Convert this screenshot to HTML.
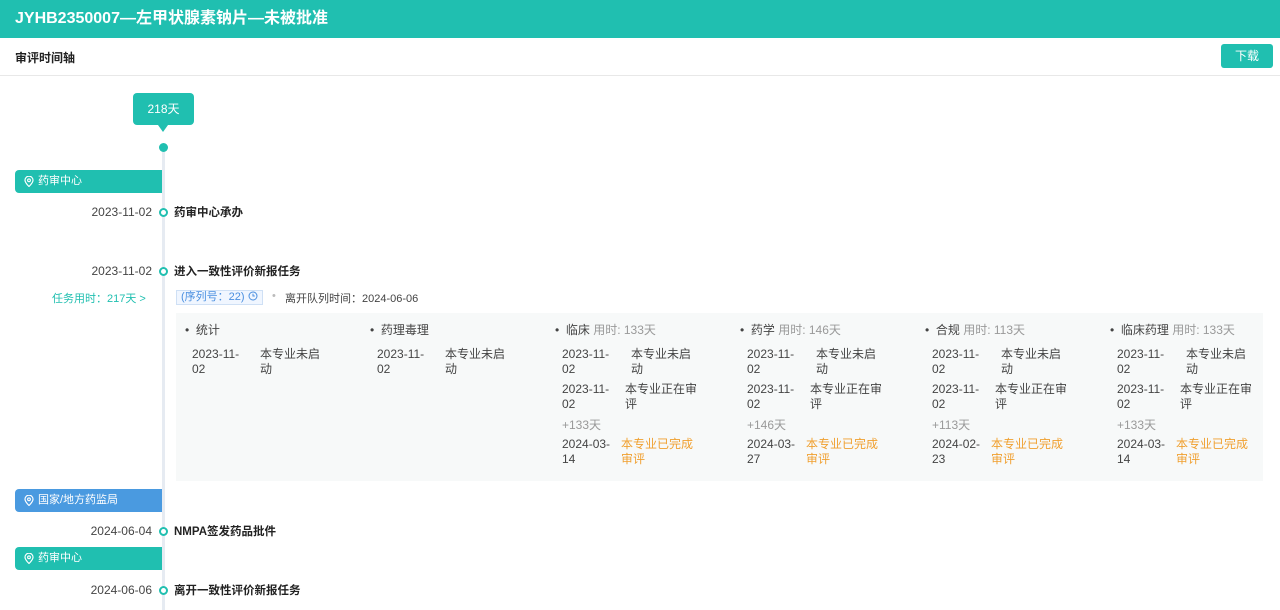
<!DOCTYPE html>
<html><head><meta charset="utf-8"><style>
*{margin:0;padding:0;box-sizing:border-box}
body{width:1280px;height:605px;overflow:hidden;background:#fff;font-family:"Liberation Sans","Noto Sans CJK SC",sans-serif;font-size:12px;color:#333;position:relative}
.a{position:absolute;white-space:nowrap}
.hdr{left:0;top:0;width:1280px;height:38px;background:#20bfb0;color:#fff;font-weight:bold;font-size:16px;line-height:38px;padding-left:15px}
.sub{left:0;top:38px;width:1280px;height:38px;border-bottom:1px solid #e8e8e8}
.btn{left:1221px;top:44px;width:52px;height:24px;background:#20bfb0;color:#fff;border-radius:3px;text-align:center;line-height:24px;font-size:12px}
.line{left:162px;top:150px;width:3px;height:460px;background:#e6ebf2}
.tag{left:15px;width:147px;height:23px;color:#fff;line-height:23px;padding-left:23px;border-radius:4px 0 0 4px;font-size:11px}
.tag svg{position:absolute;left:9px;top:6px}
.dt{width:80px;left:72px;text-align:right;color:#444}
.ring{left:159px;width:9px;height:9px;border:2px solid #20bfb0;border-radius:50%;background:#fff}
.tt{left:174px;font-weight:bold;color:#222;font-size:11.5px}
.panel{left:176px;top:313px;width:1087px;height:168px;background:#f7f9f9}
.c{line-height:15px;color:#444}
.g{color:#999}
.o{color:#f0a030}
</style></head><body>
<div class="a hdr">JYHB2350007—左甲状腺素钠片—未被批准</div>
<div class="a sub"></div>
<div class="a" style="left:15px;top:49px;font-weight:bold;font-size:12px;color:#222">审评时间轴</div>
<div class="a btn">下载</div>
<div class="a line"></div>
<div class="a" style="left:133px;top:93px;width:61px;height:32px;background:#20bfb0;border-radius:4px;color:#fff;text-align:center;line-height:32px">218天</div>
<div class="a" style="left:158px;top:125px;width:0;height:0;border-left:5px solid transparent;border-right:5px solid transparent;border-top:7px solid #20bfb0"></div>
<div class="a" style="left:159px;top:143px;width:9px;height:9px;border-radius:50%;background:#20bfb0"></div>

<div class="a tag" style="top:170px;background:#20bfb0"><svg width="10" height="11" viewBox="0 0 10 11"><path d="M5 10.5C2 7.5 1 6 1 4.2A4 4 0 0 1 9 4.2C9 6 8 7.5 5 10.5Z" fill="none" stroke="#fff" stroke-width="1.2"/><circle cx="5" cy="4.3" r="1.4" fill="none" stroke="#fff" stroke-width="1.1"/></svg>药审中心</div>
<div class="a dt" style="top:205px">2023-11-02</div><div class="a ring" style="top:208px"></div><div class="a tt" style="top:204px">药审中心承办</div>
<div class="a dt" style="top:264px">2023-11-02</div><div class="a ring" style="top:267px"></div><div class="a tt" style="top:263px">进入一致性评价新报任务</div>
<div class="a" style="left:52px;top:290px;color:#20bfb0;font-size:11px">任务用时：217天 &gt;</div>
<div class="a" style="left:176px;top:290px;height:15px;border:1px solid #cfe0f5;background:#f0f6ff;color:#4a8fe0;font-size:11px;line-height:13px;padding:0 4px">(序列号：22) <svg width="10" height="10" viewBox="0 0 10 10" style="vertical-align:-1px"><circle cx="5" cy="5" r="4" fill="none" stroke="#4a8fe0"/><path d="M5 2.8V5H6.8" fill="none" stroke="#4a8fe0"/></svg></div>
<div class="a" style="left:272px;top:290px;color:#bbb;font-size:11px">•</div>
<div class="a" style="left:285px;top:290px;color:#444;font-size:11px">离开队列时间：2024-06-06</div>

<div class="a panel"></div>
<div class="a c" style="left:185px;top:323px">•&nbsp;&nbsp;统计</div>
<div class="a c" style="left:192px;top:347px">2023-11-<br>02</div><div class="a c" style="left:260px;top:347px">本专业未启<br>动</div>

<div class="a c" style="left:370px;top:323px">•&nbsp;&nbsp;药理毒理</div>
<div class="a c" style="left:377px;top:347px">2023-11-<br>02</div><div class="a c" style="left:445px;top:347px">本专业未启<br>动</div>

<div class="a c" style="left:555px;top:323px">•&nbsp;&nbsp;临床 <span class="g">用时: 133天</span></div>
<div class="a c" style="left:562px;top:347px">2023-11-<br>02</div><div class="a c" style="left:631px;top:347px">本专业未启<br>动</div>
<div class="a c" style="left:562px;top:382px">2023-11-<br>02</div><div class="a c" style="left:625px;top:382px">本专业正在审<br>评</div>
<div class="a c g" style="left:562px;top:418px">+133天</div>
<div class="a c" style="left:562px;top:437px">2024-03-<br>14</div><div class="a c o" style="left:621px;top:437px">本专业已完成<br>审评</div>

<div class="a c" style="left:740px;top:323px">•&nbsp;&nbsp;药学 <span class="g">用时: 146天</span></div>
<div class="a c" style="left:747px;top:347px">2023-11-<br>02</div><div class="a c" style="left:816px;top:347px">本专业未启<br>动</div>
<div class="a c" style="left:747px;top:382px">2023-11-<br>02</div><div class="a c" style="left:810px;top:382px">本专业正在审<br>评</div>
<div class="a c g" style="left:747px;top:418px">+146天</div>
<div class="a c" style="left:747px;top:437px">2024-03-<br>27</div><div class="a c o" style="left:806px;top:437px">本专业已完成<br>审评</div>

<div class="a c" style="left:925px;top:323px">•&nbsp;&nbsp;合规 <span class="g">用时: 113天</span></div>
<div class="a c" style="left:932px;top:347px">2023-11-<br>02</div><div class="a c" style="left:1001px;top:347px">本专业未启<br>动</div>
<div class="a c" style="left:932px;top:382px">2023-11-<br>02</div><div class="a c" style="left:995px;top:382px">本专业正在审<br>评</div>
<div class="a c g" style="left:932px;top:418px">+113天</div>
<div class="a c" style="left:932px;top:437px">2024-02-<br>23</div><div class="a c o" style="left:991px;top:437px">本专业已完成<br>审评</div>

<div class="a c" style="left:1110px;top:323px">•&nbsp;&nbsp;临床药理 <span class="g">用时: 133天</span></div>
<div class="a c" style="left:1117px;top:347px">2023-11-<br>02</div><div class="a c" style="left:1186px;top:347px">本专业未启<br>动</div>
<div class="a c" style="left:1117px;top:382px">2023-11-<br>02</div><div class="a c" style="left:1180px;top:382px">本专业正在审<br>评</div>
<div class="a c g" style="left:1117px;top:418px">+133天</div>
<div class="a c" style="left:1117px;top:437px">2024-03-<br>14</div><div class="a c o" style="left:1176px;top:437px">本专业已完成<br>审评</div>

<div class="a tag" style="top:489px;background:#4a9ae0"><svg width="10" height="11" viewBox="0 0 10 11"><path d="M5 10.5C2 7.5 1 6 1 4.2A4 4 0 0 1 9 4.2C9 6 8 7.5 5 10.5Z" fill="none" stroke="#fff" stroke-width="1.2"/><circle cx="5" cy="4.3" r="1.4" fill="none" stroke="#fff" stroke-width="1.1"/></svg>国家/地方药监局</div>
<div class="a dt" style="top:524px">2024-06-04</div><div class="a ring" style="top:527px"></div><div class="a tt" style="top:523px">NMPA签发药品批件</div>
<div class="a tag" style="top:547px;background:#20bfb0"><svg width="10" height="11" viewBox="0 0 10 11"><path d="M5 10.5C2 7.5 1 6 1 4.2A4 4 0 0 1 9 4.2C9 6 8 7.5 5 10.5Z" fill="none" stroke="#fff" stroke-width="1.2"/><circle cx="5" cy="4.3" r="1.4" fill="none" stroke="#fff" stroke-width="1.1"/></svg>药审中心</div>
<div class="a dt" style="top:583px">2024-06-06</div><div class="a ring" style="top:586px"></div><div class="a tt" style="top:582px">离开一致性评价新报任务</div>
</body></html>
